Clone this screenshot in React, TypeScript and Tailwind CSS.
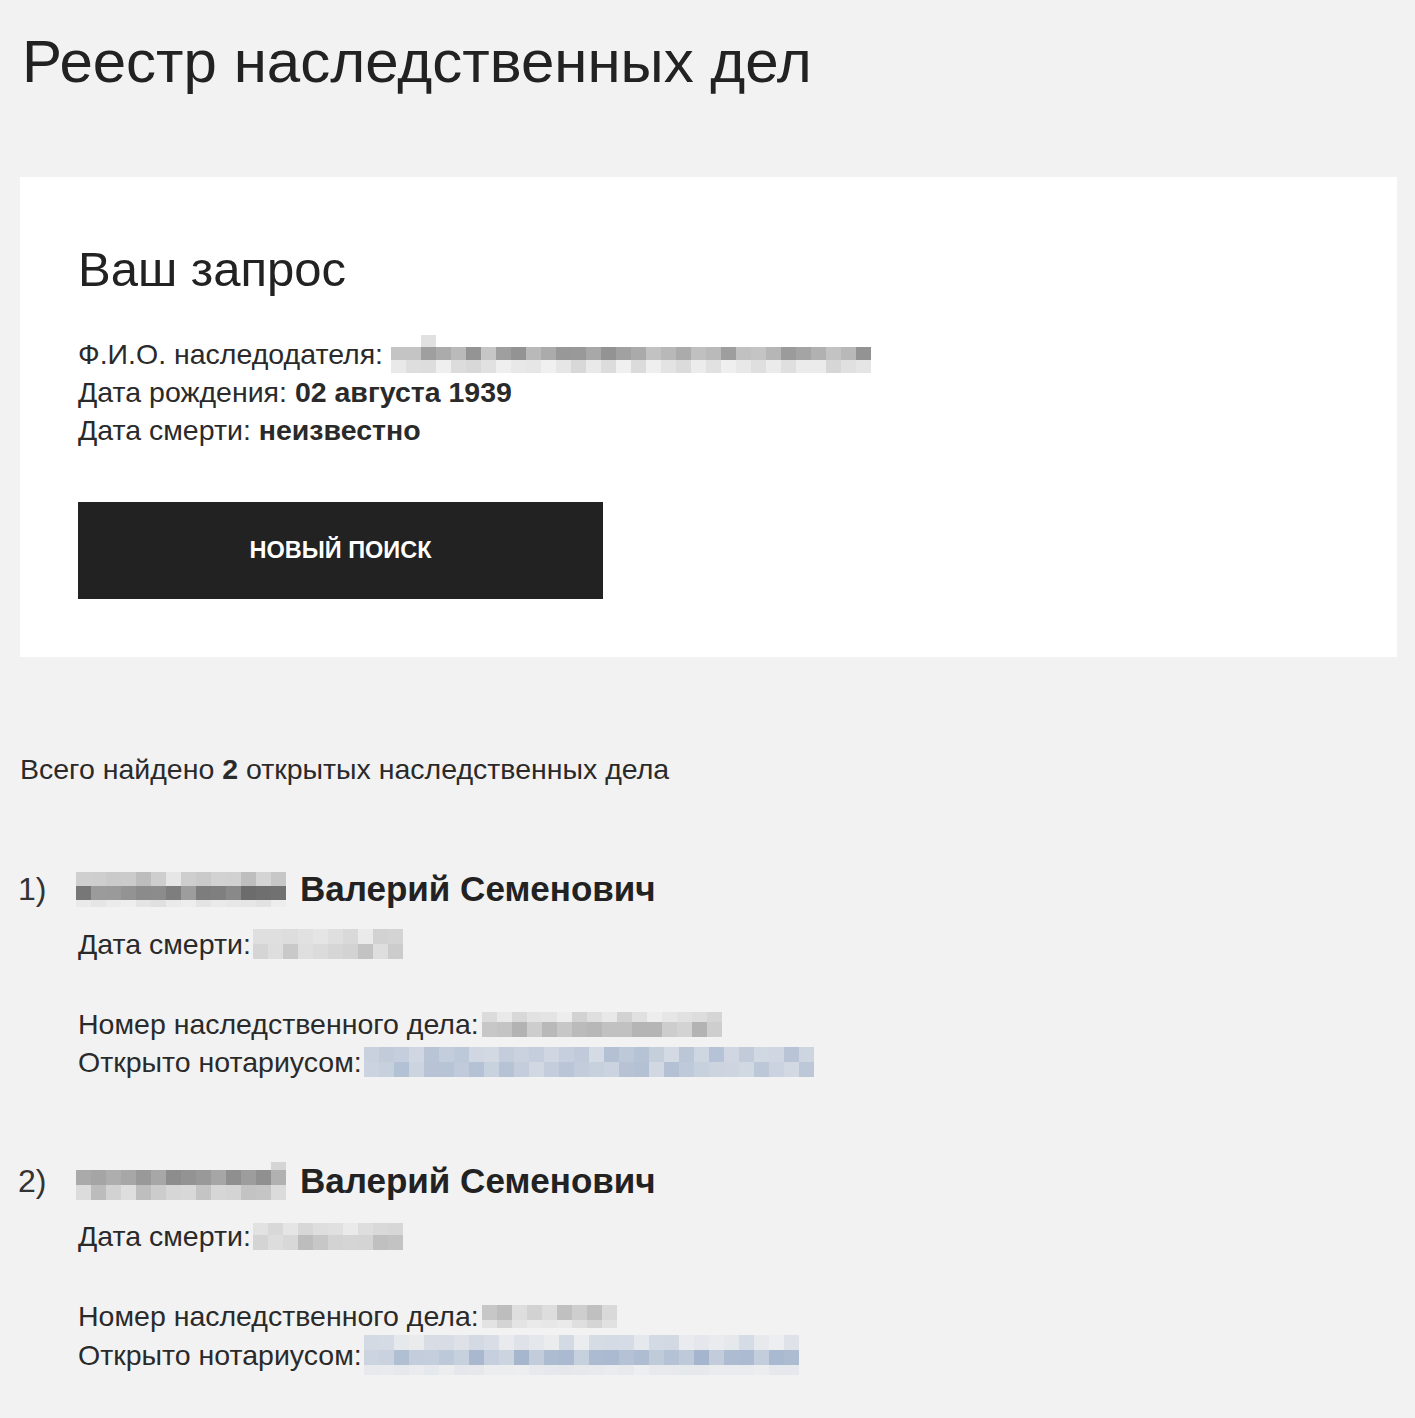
import React from 'react';

type PixelRow = { h: number; lo: number; hi: number; p?: number };

// deterministic noise so the censored blocks look the same every render
function mulberry32(seed: number) {
  let a = seed;
  return () => {
    a |= 0;
    a = (a + 0x6d2b79f5) | 0;
    let t = Math.imul(a ^ (a >>> 15), 1 | a);
    t = (t + Math.imul(t ^ (t >>> 7), 61 | t)) ^ t;
    return ((t ^ (t >>> 14)) >>> 0) / 4294967296;
  };
}

interface PixelsProps {
  seed: number;
  cols: number;
  rows: PixelRow[];
  tint?: 'gray' | 'blue';
  bg?: number[];
  className?: string;
}

function Pixels({ seed, cols, rows, tint = 'gray', bg = [242, 242, 242], className = '' }: PixelsProps) {
  const rand = mulberry32(seed);
  const ink = tint === 'blue' ? [138, 160, 192] : [90, 90, 90];

  const cellColor = (row: PixelRow) => {
    if (row.p !== undefined && rand() > row.p) {
      rand();
      return `rgb(${bg[0]},${bg[1]},${bg[2]})`;
    }
    const s = row.lo + (row.hi - row.lo) * rand();
    const c = bg.map((b, i) => Math.round(b + (ink[i] - b) * s));
    return `rgb(${c[0]},${c[1]},${c[2]})`;
  };

  return (
    <span className={`inline-flex flex-col shrink-0 ${className}`}>
      {rows.map((row, ri) => (
        <span key={ri} className="flex" style={{ height: row.h }}>
          {Array.from({ length: cols }).map((_, ci) => (
            <span key={ci} className="w-[15px] h-full" style={{ background: cellColor(row) }} />
          ))}
        </span>
      ))}
    </span>
  );
}

interface CaseItem {
  index: number;
  seed: number;
  nameRows: PixelRow[];
  dateCols: number;
  dateRows: PixelRow[];
  numberCols: number;
  numberRows: PixelRow[];
  notaryCols: number;
  notaryRows: PixelRow[];
}

const cases: CaseItem[] = [
  {
    index: 1,
    seed: 11,
    nameRows: [
      { h: 14, lo: 0.05, hi: 0.4 },
      { h: 14, lo: 0.5, hi: 0.95 },
      { h: 7, lo: 0.02, hi: 0.12 },
    ],
    dateCols: 10,
    dateRows: [
      { h: 15, lo: 0.05, hi: 0.22 },
      { h: 15, lo: 0.12, hi: 0.32 },
    ],
    numberCols: 16,
    numberRows: [
      { h: 10, lo: 0.03, hi: 0.22 },
      { h: 15, lo: 0.2, hi: 0.45 },
    ],
    notaryCols: 30,
    notaryRows: [
      { h: 15, lo: 0.25, hi: 0.62 },
      { h: 15, lo: 0.28, hi: 0.62 },
    ],
  },
  {
    index: 2,
    seed: 29,
    nameRows: [
      { h: 8, lo: 0.1, hi: 0.25, p: 0.15 },
      { h: 15, lo: 0.4, hi: 0.7 },
      { h: 15, lo: 0.12, hi: 0.42 },
    ],
    dateCols: 10,
    dateRows: [
      { h: 12, lo: 0.05, hi: 0.2 },
      { h: 15, lo: 0.1, hi: 0.45 },
    ],
    numberCols: 9,
    numberRows: [
      { h: 15, lo: 0.1, hi: 0.4 },
      { h: 8, lo: 0.05, hi: 0.2 },
    ],
    notaryCols: 29,
    notaryRows: [
      { h: 15, lo: 0.05, hi: 0.3 },
      { h: 15, lo: 0.35, hi: 0.75 },
      { h: 10, lo: 0.05, hi: 0.14 },
    ],
  },
];

function CaseEntry({ item }: { item: CaseItem }) {
  return (
    <div className="flex">
      <div className="w-[76px] shrink-0 pl-[18px] text-[32px] leading-[40px] text-[#333]">{item.index})</div>
      <div className="flex flex-col">
        <div className="flex items-center h-[40px]">
          <Pixels seed={item.seed} cols={14} rows={item.nameRows} />
          <span className="ml-[14px] text-[35px] font-bold text-[#222] whitespace-nowrap">Валерий Семенович</span>
        </div>
        <div className="flex items-center mt-[16px] leading-[38px] ml-[2px]">
          <span>Дата смерти:</span>
          <Pixels seed={item.seed + 3} cols={item.dateCols} rows={item.dateRows} className="ml-[2px]" />
        </div>
        <div className="flex items-center mt-[42px] leading-[38px] ml-[2px]">
          <span>Номер наследственного дела:</span>
          <Pixels seed={item.seed + 5} cols={item.numberCols} rows={item.numberRows} className="ml-[3px]" />
        </div>
        <div className="flex items-center leading-[38px] ml-[2px]">
          <span>Открыто нотариусом:</span>
          <Pixels
            seed={item.seed + 7}
            cols={item.notaryCols}
            rows={item.notaryRows}
            tint="blue"
            className="ml-[2px]"
          />
        </div>
      </div>
    </div>
  );
}

export default function App() {
  return (
    <div className="min-h-screen bg-[#f2f2f2] font-['Liberation_Sans',Arial,sans-serif] text-[28.5px] text-[#2a2a2a] pt-[32px] pb-[40px]">
      <h1 className="pl-[22px] text-[60px] leading-none text-[#222] whitespace-nowrap">Реестр наследственных дел</h1>

      <div className="mt-[85px] ml-[20px] mr-[18px] bg-white h-[480px] pt-[68px] pl-[58px]">
        <h2 className="text-[49px] leading-none text-[#222]">Ваш запрос</h2>
        <div className="mt-[41px] leading-[38px]">
          <div className="flex items-center">
            <span>Ф.И.О. наследодателя:</span>
            <Pixels
              seed={5}
              cols={32}
              bg={[255, 255, 255]}
              rows={[
                { h: 12, lo: 0.08, hi: 0.25, p: 0.2 },
                { h: 13, lo: 0.33, hi: 0.67 },
                { h: 13, lo: 0.08, hi: 0.25 },
              ]}
              className="ml-[8px]"
            />
          </div>
          <div>
            Дата рождения: <b>02 августа 1939</b>
          </div>
          <div>
            Дата смерти: <b>неизвестно</b>
          </div>
        </div>
        <button className="mt-[53px] w-[525px] h-[97px] bg-[#222] text-white text-[23.5px] font-bold uppercase">
          Новый поиск
        </button>
      </div>

      <p className="mt-[93px] pl-[20px] leading-[38px]">
        Всего найдено <b>2</b> открытых наследственных дела
      </p>

      <div className="mt-[81px] flex flex-col gap-[80px]">
        {cases.map((item) => (
          <CaseEntry key={item.index} item={item} />
        ))}
      </div>
    </div>
  );
}
